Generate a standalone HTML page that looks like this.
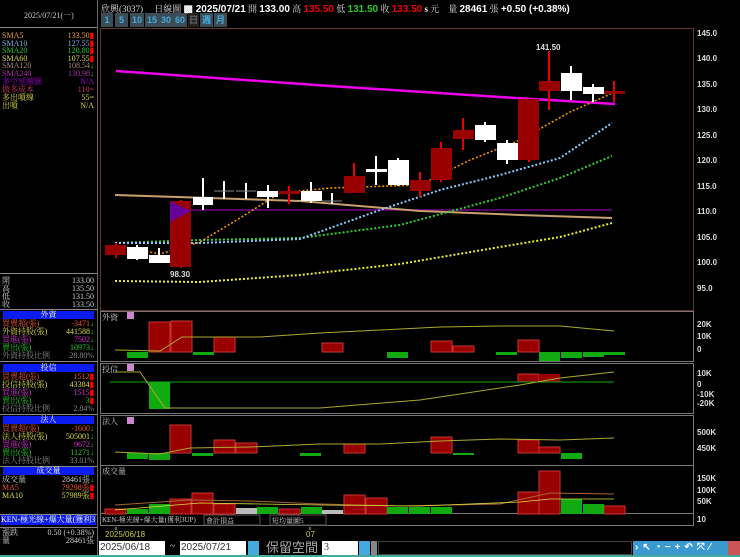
<!DOCTYPE html>
<html><head><meta charset="utf-8"><style>
*{margin:0;padding:0;box-sizing:border-box}
body{width:740px;height:557px;background:#000;overflow:hidden;position:relative;font-family:"Liberation Serif","Noto Serif CJK SC","Noto Sans CJK TC",serif;font-size:8px;color:#ccc}
.a{position:absolute;white-space:nowrap}
.r{position:absolute;left:2px;width:92px;height:8px;line-height:8px;font-size:8px;white-space:nowrap}
.r span{position:absolute;right:0;top:0}
.hd{position:absolute;left:3px;width:91px;height:8px;background:#0a1cf0;color:#fff;text-align:center;line-height:8px;font-size:8px}
.btn{position:absolute;top:13px;height:14px;background:#3c4c54;color:#4ad;font:bold 9px "Liberation Sans",sans-serif;line-height:14px;text-align:center}
</style></head><body>
<!-- left panel -->
<div class="a" style="left:0;top:0;width:98px;height:557px;border-right:1px solid #666"></div>
<div class="a" style="left:0;top:27px;width:97px;border-top:1px solid #888"></div>
<div class="a" style="left:24px;top:10px;color:#ccc;font-size:8px">2025/07/21(一)</div>
<div class="r" style="top:32px;color:#e8a040">SMA5<span>133.50<b style="color:#f00">▮</b></span></div>
<div class="r" style="top:40px;color:#7ab4e0">SMA10<span>127.55<b style="color:#f00">▮</b></span></div>
<div class="r" style="top:47px;color:#2c2">SMA20<span>120.80<b style="color:#f00">▮</b></span></div>
<div class="r" style="top:55px;color:#dd4">SMA60<span>107.55<b style="color:#f00">▮</b></span></div>
<div class="r" style="top:62px;color:#a87">SMA120<span>108.54<b style="color:#2c2">↓</b></span></div>
<div class="r" style="top:70px;color:#a3a">SMA240<span>130.98<b style="color:#2c2">↓</b></span></div>
<div class="r" style="top:78px;color:#90c">多空延續圖<span>N/A</span></div>
<div class="r" style="top:86px;color:#c36">做多成本<span>110=</span></div>
<div class="r" style="top:94px;color:#dd4">多出噴線<span>55=</span></div>
<div class="r" style="top:102px;color:#dd4">出噴<span>N/A</span></div>
<div class="a" style="left:0;top:273px;width:97px;border-top:1px solid #888"></div>
<div class="r" style="top:277px">開<span>133.00</span></div>
<div class="r" style="top:285px">高<span>135.50</span></div>
<div class="r" style="top:293px">低<span>131.50</span></div>
<div class="r" style="top:301px">收<span>133.50</span></div>
<div class="a" style="left:0;top:309px;width:97px;border-top:1px solid #888"></div>
<div class="hd" style="top:311px">外資</div>
<div class="r" style="top:320px;color:#e53">買賣超(張)<span>-3471<b style="color:#2c2">↓</b></span></div>
<div class="r" style="top:328px;color:#dd4">外資持股(張)<span>441588<b style="color:#2c2">↓</b></span></div>
<div class="r" style="top:336px;color:#d3d">買進(張)<span>7502<b style="color:#2c2">↓</b></span></div>
<div class="r" style="top:344px;color:#2c2">賣出(張)<span>10973<b style="color:#2c2">↓</b></span></div>
<div class="r" style="top:352px;color:#888">外資持股比例<span>28.80%</span></div>
<div class="a" style="left:0;top:361px;width:97px;border-top:1px solid #888"></div>
<div class="hd" style="top:364px">投信</div>
<div class="r" style="top:373px;color:#e53">買賣超(張)<span>1512<b style="color:#f00">▮</b></span></div>
<div class="r" style="top:381px;color:#dd4">投信持股(張)<span>43384<b style="color:#f00">▮</b></span></div>
<div class="r" style="top:389px;color:#d3d">買進(張)<span>1515<b style="color:#f00">▮</b></span></div>
<div class="r" style="top:397px;color:#2c2">賣出(張)<span>3<b style="color:#f00">▮</b></span></div>
<div class="r" style="top:405px;color:#888">投信持股比例<span>2.84%</span></div>
<div class="a" style="left:0;top:414px;width:97px;border-top:1px solid #888"></div>
<div class="hd" style="top:416px">法人</div>
<div class="r" style="top:425px;color:#e53">買賣超(張)<span>-1600<b style="color:#2c2">↓</b></span></div>
<div class="r" style="top:433px;color:#dd4">法人持股(張)<span>505001<b style="color:#2c2">↓</b></span></div>
<div class="r" style="top:441px;color:#d3d">買進(張)<span>9672<b style="color:#2c2">↓</b></span></div>
<div class="r" style="top:449px;color:#2c2">賣出(張)<span>11271<b style="color:#2c2">↓</b></span></div>
<div class="r" style="top:457px;color:#888">法人持股比例<span>33.01%</span></div>
<div class="a" style="left:0;top:466px;width:97px;border-top:1px solid #888"></div>
<div class="hd" style="top:467px">成交量</div>
<div class="r" style="top:476px;color:#ccc">成交量<span>28461張<b style="color:#2c2">↓</b></span></div>
<div class="r" style="top:484px;color:#e53">MA5<span>79298張<b style="color:#f00">▮</b></span></div>
<div class="r" style="top:492px;color:#dd4">MA10<span>57989張<b style="color:#f00">▮</b></span></div>
<div class="a" style="left:0;top:514px;width:97px;border-top:1px solid #888"></div>
<div class="a" style="left:1px;top:515px;width:95px;height:10px;background:#0a1cf0;color:#fff;font-size:8px;line-height:10px;overflow:hidden">KEN-極光線+爆大量(獲利3UP)</div>
<div class="a" style="left:0;top:527px;width:97px;border-top:1px solid #888"></div>
<div class="r" style="top:529px">漲跌<span>0.50 (+0.38%)</span></div>
<div class="r" style="top:537px">量<span>28461張</span></div>

<!-- header -->
<div class="a" style="left:101px;top:2px;font-size:9px;color:#ddd">欣興(3037)　 日線圖 <b style="font:bold 10px 'Liberation Sans',sans-serif;color:#fff">▩ 2025/07/21</b> 開 <b style="font:bold 10px 'Liberation Sans',sans-serif;color:#fff">133.00</b> 高 <b style="font:bold 10px 'Liberation Sans',sans-serif;color:#e00">135.50</b> 低 <b style="font:bold 10px 'Liberation Sans',sans-serif;color:#2c2">131.50</b> 收 <b style="font:bold 10px 'Liberation Sans',sans-serif;color:#e00">133.50</b> <b style="color:#fff">s</b> 元　量 <b style="font:bold 10px 'Liberation Sans',sans-serif;color:#fff">28461</b> 張 <b style="font:bold 10px 'Liberation Sans',sans-serif;color:#fff">+0.50 (+0.38%)</b></div>
<div class="btn" style="left:101px;width:12px">1</div>
<div class="btn" style="left:115px;width:13px">5</div>
<div class="btn" style="left:130px;width:14px">10</div>
<div class="btn" style="left:145px;width:14px">15</div>
<div class="btn" style="left:159px;width:14px">30</div>
<div class="btn" style="left:173px;width:14px">60</div>
<div class="btn" style="left:188px;width:11px;background:#222;color:#666">日</div>
<div class="btn" style="left:200px;width:13px">週</div>
<div class="btn" style="left:214px;width:13px">月</div>

<svg class="a" style="left:0;top:0" width="740" height="557" font-family="Liberation Sans,sans-serif">
<rect x="100.5" y="28.5" width="593" height="282" fill="none" stroke="#633"/>
<g fill="#ddd" font-size="8" font-weight="bold">
<text x="697" y="36">145.0</text><text x="697" y="61">140.0</text><text x="697" y="87">135.0</text><text x="697" y="112">130.0</text><text x="697" y="138">125.0</text><text x="697" y="163">120.0</text><text x="697" y="189">115.0</text><text x="697" y="214">110.0</text><text x="697" y="240">105.0</text><text x="697" y="265">100.0</text><text x="697" y="291">95.0</text>
<text x="697" y="327">20K</text><text x="697" y="339">10K</text><text x="697" y="352">0</text>
<text x="697" y="376">10K</text><text x="697" y="387">0</text><text x="697" y="397">-10K</text><text x="697" y="406">-20K</text>
<text x="697" y="435">500K</text><text x="697" y="451">450K</text>
<text x="697" y="481">150K</text><text x="697" y="493">100K</text><text x="697" y="504">50K</text><text x="697" y="522">10</text>
</g>
<line x1="180" y1="210" x2="612" y2="210" stroke="#708" stroke-width="1.5"/>
<polyline points="115,195 300,201 420,211 520,215 612,218" fill="none" stroke="#c9a070" stroke-width="2"/>
<polyline points="116,71 330,86 500,97 615,104" fill="none" stroke="#e0e" stroke-width="2.5"/>
<polyline points="115,281 200,282 300,275 400,264 500,247 560,237 612,223" fill="none" stroke="#ee3" stroke-width="2" stroke-dasharray="2,2"/>
<polyline points="115,243 200,240 300,238 400,225 500,198 560,178 612,156" fill="none" stroke="#3c3" stroke-width="2" stroke-dasharray="2,2"/>
<polyline points="115,243 200,243 300,239 380,210 440,190 500,175 560,158 612,123" fill="none" stroke="#8cf" stroke-width="2" stroke-dasharray="2,2"/>
<polyline points="115,245 160,254 200,242 240,218 280,193 330,188 420,185 470,160 520,140 570,112 615,92" fill="none" stroke="#f90" stroke-width="1.5" stroke-dasharray="2,2"/>
<g stroke-width="2">
<line x1="116" y1="243" x2="116" y2="258" stroke="#c00"/><rect x="105" y="245" width="21" height="10" fill="#900"/>
<line x1="137" y1="245" x2="137" y2="260" stroke="#fff"/><rect x="127" y="247" width="21" height="12" fill="#fff"/>
<line x1="159" y1="248" x2="159" y2="263" stroke="#fff"/><rect x="149" y="255" width="21" height="8" fill="#fff"/>
<line x1="181" y1="200" x2="181" y2="268" stroke="#c00"/><rect x="170" y="201" width="21" height="66" fill="#900"/><polygon points="170,201 191,211 170,222" fill="#609"/>
<line x1="203" y1="178" x2="203" y2="210" stroke="#fff"/><rect x="193" y="197" width="20" height="8" fill="#fff"/>
<line x1="224" y1="181" x2="224" y2="199" stroke="#fff"/><line x1="214" y1="191" x2="234" y2="191" stroke="#888" stroke-width="1"/>
<line x1="246" y1="183" x2="246" y2="199" stroke="#fff"/><line x1="236" y1="191" x2="256" y2="191" stroke="#888" stroke-width="1"/>
<line x1="268" y1="185" x2="268" y2="208" stroke="#fff"/><rect x="257" y="191" width="21" height="6" fill="#fff"/>
<line x1="289" y1="186" x2="289" y2="204" stroke="#e00"/><rect x="279" y="191" width="21" height="3" fill="#900"/>
<line x1="311" y1="182" x2="311" y2="203" stroke="#fff"/><rect x="301" y="191" width="21" height="10" fill="#fff"/>
<line x1="332" y1="193" x2="332" y2="204" stroke="#fff"/><line x1="322" y1="201" x2="342" y2="201" stroke="#888" stroke-width="1"/>
<line x1="354" y1="163" x2="354" y2="192" stroke="#e00"/><rect x="344" y="176" width="21" height="17" fill="#900"/>
<line x1="376" y1="156" x2="376" y2="185" stroke="#fff"/><rect x="366" y="169" width="21" height="3" fill="#fff"/>
<line x1="398" y1="158" x2="398" y2="186" stroke="#fff"/><rect x="388" y="160" width="21" height="25" fill="#fff"/>
<line x1="420" y1="172" x2="420" y2="197" stroke="#e00"/><rect x="410" y="180" width="21" height="11" fill="#900"/>
<line x1="441" y1="142" x2="441" y2="182" stroke="#e00"/><rect x="431" y="148" width="21" height="32" fill="#900"/>
<line x1="463" y1="118" x2="463" y2="150" stroke="#e00"/><rect x="453" y="130" width="21" height="9" fill="#900"/>
<line x1="485" y1="122" x2="485" y2="142" stroke="#fff"/><rect x="475" y="125" width="21" height="15" fill="#fff"/>
<line x1="507" y1="140" x2="507" y2="164" stroke="#fff"/><rect x="497" y="143" width="21" height="17" fill="#fff"/>
<line x1="529" y1="100" x2="529" y2="162" stroke="#e00"/><rect x="518" y="99" width="21" height="61" fill="#900"/>
<line x1="549" y1="51" x2="549" y2="110" stroke="#e00"/><rect x="539" y="81" width="21" height="10" fill="#900"/>
<line x1="571" y1="66" x2="571" y2="100" stroke="#fff"/><rect x="561" y="73" width="21" height="18" fill="#fff"/>
<line x1="593" y1="84" x2="593" y2="102" stroke="#fff"/><rect x="583" y="87" width="21" height="7" fill="#fff"/>
<line x1="614" y1="81" x2="614" y2="102" stroke="#e00"/><rect x="604" y="91" width="21" height="3" fill="#900"/>
</g>
<text x="536" y="50" fill="#ddd" font-size="8" font-weight="bold">141.50</text>
<text x="170" y="277" fill="#ddd" font-size="8" font-weight="bold">98.30</text>
<g fill="none" stroke="#777"><rect x="100.5" y="311.5" width="593" height="50"/><rect x="100.5" y="363.5" width="593" height="50"/><rect x="100.5" y="415.5" width="593" height="50"/><rect x="100.5" y="465.5" width="593" height="48"/><rect x="100.5" y="513.5" width="593" height="12"/></g>
<g font-size="8" fill="#ccc" font-family="Liberation Serif,Noto Serif CJK SC,serif"><text x="102" y="320">外資</text><text x="102" y="372">投信</text><text x="102" y="424">法人</text><text x="102" y="474">成交量</text></g>
<g fill="#c8c"><rect x="127" y="312" width="7" height="7"/><rect x="127" y="364" width="7" height="7"/><rect x="127" y="417" width="7" height="7"/></g>
<g stroke="#c33" stroke-width="1"><rect x="149" y="322" width="21" height="30" fill="#900"/><rect x="171" y="321" width="21" height="31" fill="#900"/><rect x="214" y="337" width="21" height="15" fill="#900"/><rect x="322" y="343" width="21" height="9" fill="#900"/><rect x="431" y="341" width="21" height="11" fill="#900"/><rect x="518" y="340" width="21" height="12" fill="#900"/><rect x="453" y="346" width="21" height="6" fill="#900"/></g>
<g fill="#1a1"><rect x="127" y="352" width="21" height="6"/><rect x="193" y="352" width="21" height="3"/><rect x="387" y="352" width="21" height="6"/><rect x="496" y="352" width="21" height="3"/><rect x="539" y="352" width="21" height="9"/><rect x="561" y="352" width="21" height="6"/><rect x="583" y="352" width="21" height="5"/><rect x="604" y="352" width="21" height="3"/></g>
<polyline points="115,350 160,351 182,337 200,337 260,337 320,333 380,330 440,327 500,326 560,326 614,331" fill="none" stroke="#aa3" stroke-width="1"/>
<rect x="149" y="382" width="21" height="27" fill="#1a1"/><rect x="518" y="374" width="21" height="8" fill="#900" stroke="#c33"/><rect x="539" y="374" width="21" height="8" fill="#900"/>
<line x1="110" y1="382" x2="614" y2="382" stroke="#1a1"/>
<polyline points="115,372 140,372 165,408 320,408 420,400 520,385 560,378 614,372" fill="none" stroke="#aa3" stroke-width="1"/>
<g stroke="#c33" stroke-width="1" fill="#900"><rect x="170" y="425" width="21" height="28"/><rect x="214" y="440" width="21" height="13"/><rect x="236" y="443" width="21" height="10"/><rect x="431" y="437" width="21" height="16"/><rect x="344" y="444" width="21" height="9"/><rect x="518" y="440" width="21" height="13"/><rect x="539" y="447" width="21" height="6"/></g>
<g fill="#1a1"><rect x="127" y="453" width="21" height="6"/><rect x="149" y="453" width="21" height="7"/><rect x="192" y="453" width="21" height="3"/><rect x="300" y="453" width="21" height="3"/><rect x="561" y="453" width="21" height="6"/><rect x="453" y="453" width="21" height="2"/></g>
<polyline points="115,452 160,454 190,448 250,447 320,444 380,444 440,441 500,439 560,440 614,438" fill="none" stroke="#aa3" stroke-width="1"/>
<g stroke="#c33" stroke-width="1" fill="#900"><rect x="105" y="509" width="21" height="5"/><rect x="170" y="499" width="21" height="15"/><rect x="192" y="493" width="21" height="21"/><rect x="214" y="504" width="21" height="10"/><rect x="279" y="509" width="21" height="5"/><rect x="344" y="495" width="21" height="19"/><rect x="366" y="498" width="21" height="16"/><rect x="518" y="492" width="21" height="22"/><rect x="539" y="471" width="21" height="43"/><rect x="604" y="506" width="21" height="8"/></g>
<g fill="#1a1"><rect x="127" y="509" width="21" height="5"/><rect x="149" y="504" width="21" height="10"/><rect x="257" y="507" width="21" height="7"/><rect x="301" y="507" width="21" height="7"/><rect x="409" y="507" width="21" height="7"/><rect x="431" y="507" width="21" height="7"/><rect x="387" y="507" width="21" height="7"/><rect x="561" y="499" width="21" height="15"/><rect x="583" y="504" width="21" height="10"/></g>
<g fill="#bbb"><rect x="236" y="508" width="21" height="6"/><rect x="322" y="510" width="21" height="4"/></g>
<polyline points="115,505 190,500 250,501 320,504 400,506 500,504 550,493 614,494" fill="none" stroke="#a63" stroke-width="1"/>
<polyline points="115,510 200,503 320,505 420,506 520,502 550,499 614,499" fill="none" stroke="#dd4" stroke-width="0.8"/>
<text x="102" y="522" font-size="7" fill="#ccc" font-family="Liberation Serif,Noto Serif CJK SC,serif">KEN-極光線+爆大量(獲利3UP)</text>
<rect x="204" y="515" width="56" height="10" fill="#000" stroke="#555"/><text x="206" y="523" font-size="7" fill="#ccc" font-family="Liberation Serif,Noto Serif CJK SC,serif">會計損益</text>
<rect x="270" y="515" width="56" height="10" fill="#000" stroke="#555"/><text x="272" y="523" font-size="7" fill="#ccc" font-family="Liberation Serif,Noto Serif CJK SC,serif">短均量圖5</text>
<line x1="116" y1="527" x2="116" y2="530" stroke="#cc4"/><line x1="310" y1="527" x2="310" y2="530" stroke="#cc4"/>
<text x="105" y="537" font-size="8" fill="#cc4" font-family="Liberation Sans">2025/06/18</text>
<text x="306" y="537" font-size="8" fill="#cc4" font-family="Liberation Sans">07</text>
</svg>
<div class="a" style="left:99px;top:541px;width:66px;height:14px;background:#fff;color:#333;font:10px 'Liberation Sans',sans-serif;line-height:14px;padding-left:1px">2025/06/18</div>
<div class="a" style="left:170px;top:541px;color:#ccc;font-size:10px">~</div>
<div class="a" style="left:180px;top:541px;width:66px;height:14px;background:#fff;color:#333;font:10px 'Liberation Sans',sans-serif;line-height:14px;padding-left:1px">2025/07/21</div>
<div class="a" style="left:248px;top:541px;width:11px;height:14px;background:#4ad"></div>
<div class="a" style="left:266px;top:539px;color:#aaa;font-size:13px;font-family:'Noto Sans CJK TC',sans-serif;line-height:16px">保留空間</div>
<div class="a" style="left:322px;top:541px;width:36px;height:14px;background:#fff;color:#333;font-size:10px;line-height:14px;padding-left:2px">3</div>
<div class="a" style="left:359px;top:541px;width:11px;height:14px;background:#4ad"></div>
<div class="a" style="left:371px;top:541px;width:6px;height:14px;background:#888"></div>
<div class="a" style="left:378px;top:541px;width:254px;height:14px;background:#000;border:1px solid #444"></div>
<div class="a" style="left:633px;top:541px;width:107px;height:14px;background:#3a9ad0"></div>
<div class="a" style="left:635px;top:541px;width:98px;height:14px;color:#fff;font:bold 10px 'Liberation Sans',sans-serif;letter-spacing:4px;line-height:14px">›↖◔−+↶⤧⁄</div>
<div class="a" style="left:728px;top:541px;width:12px;height:14px;background:#c55"></div>
<div class="a" style="left:0;top:555px;width:740px;height:2px;background:#4a9"></div>
</body></html>
